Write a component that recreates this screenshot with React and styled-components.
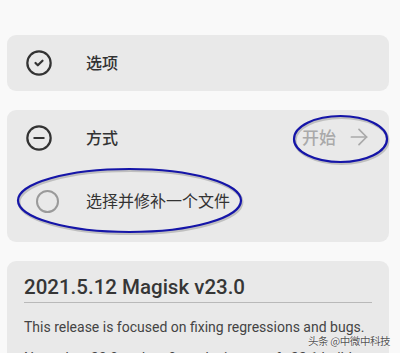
import React from "react";
import styled, { createGlobalStyle } from "styled-components";
import { CircleCheck, CircleMinus, ArrowRight } from "lucide-react";

const Global = createGlobalStyle`
  html, body { margin: 0; padding: 0; background: #f9f9f9; overflow: hidden; }
  body { font-family: Roboto, "Noto Sans CJK SC", sans-serif; }
`;

const Page = styled.div`
  position: relative;
  width: 400px;
  height: 353px;
  overflow: hidden;
  box-sizing: border-box;
  padding: 35px 11px 0 7px;
  display: flex;
  flex-direction: column;
  gap: 19px;
`;

const Card = styled.div`
  background: #e9e9e9;
  border-radius: 9px;
  display: flex;
  flex-direction: column;
  padding: ${(p) => p.$pad || "0"};
  flex-shrink: 0;
`;

const Row = styled.div`
  display: flex;
  align-items: center;
  height: ${(p) => p.$h}px;
  padding: 0 16px 0 18px;
`;

const IconSlot = styled.div`
  width: 28px;
  height: 28px;
  flex-shrink: 0;
  display: flex;
  align-items: center;
  justify-content: center;
  color: #333;
  margin-left: ${(p) => p.$ml || 0}px;
  svg { flex-shrink: 0; }
`;

const Radio = styled.div`
  flex-shrink: 0;
  width: 19px;
  height: 19px;
  border: 2px solid #9a9a9a;
  border-radius: 50%;
`;

const Label = styled.span`
  font-family: "Noto Sans CJK SC", sans-serif;
  font-size: 16px;
  font-weight: ${(p) => p.$w || 500};
  color: #333;
  margin-left: ${(p) => p.$ml}px;
  margin-top: -3px;
  flex: 1;
`;

const Action = styled.div`
  display: flex;
  align-items: center;
  gap: 10px;
  color: #a9a9a9;
  font-family: "Noto Sans CJK SC", sans-serif;
  font-size: 17px;
  font-weight: 500;
  margin: -3px 1px 0 0;
  svg { flex-shrink: 0; }
`;

const Title = styled.h2`
  margin: 0;
  font-family: Roboto, sans-serif;
  font-weight: 500;
  font-size: 20.5px;
  color: #363636;
  padding-bottom: 2px;
  border-bottom: 1px solid #b9b9b9;
  line-height: 26px;
`;

const Para = styled.p`
  margin: ${(p) => p.$m};
  font-family: Roboto, sans-serif;
  font-size: 14px;
  color: #444;
  line-height: 20px;
  white-space: nowrap;
`;

const Watermark = styled.div`
  position: absolute;
  left: 308px;
  top: 333px;
  white-space: nowrap;
  font-family: "Noto Sans CJK SC", sans-serif;
  font-size: 10.5px;
  color: #555;
  text-shadow: 0 0 2px #fff, 0 0 1px #fff;
  letter-spacing: -0.4px;
`;

const Mark = styled.svg`
  position: absolute;
  left: ${(p) => p.$x}px;
  top: ${(p) => p.$y}px;
  overflow: visible;
`;

function Ellipse({ x, y, w, h }) {
  return (
    <Mark $x={x} $y={y} width={w} height={h}>
      <ellipse cx={w / 2 + 1} cy={h / 2 + 1.5} rx={w / 2 - 1} ry={h / 2 - 1} fill="none" stroke="rgba(0,0,0,0.18)" strokeWidth="3" />
      <ellipse cx={w / 2} cy={h / 2} rx={w / 2 - 1} ry={h / 2 - 1} fill="none" stroke="#1515a8" strokeWidth="2.2" />
    </Mark>
  );
}

export default function App() {
  return (
    <>
      <Global />
      <Page>
        <Card>
          <Row $h={56}>
            <IconSlot>
              <CircleCheck size={28} strokeWidth={1.9} />
            </IconSlot>
            <Label $ml={33}>选项</Label>
          </Row>
        </Card>
        <Card $pad="0 0 6px 0">
          <Row $h={56}>
            <IconSlot>
              <CircleMinus size={28} strokeWidth={1.9} />
            </IconSlot>
            <Label $ml={33}>方式</Label>
            <Action>
              开始
              <ArrowRight size={26} strokeWidth={1.6} />
            </Action>
          </Row>
          <Row $h={70}>
            <IconSlot $ml={8}>
              <Radio />
            </IconSlot>
            <Label $ml={25} $w={400}>选择并修补一个文件</Label>
          </Row>
        </Card>
        <Card $pad="13px 17px 10px 17px">
          <Title>2021.5.12 Magisk v23.0</Title>
          <Para $m="14px 0 0 0">This release is focused on fixing regressions and bugs.</Para>
          <Para $m="11px 0 0 0">Note: the v23.0 update fixes the issues of v22.1 build</Para>
        </Card>
        <Ellipse x={293} y={115} w={95} h={48} />
        <Ellipse x={17} y={168} w={225} h={65} />
        <Watermark>头条 @中微中科技</Watermark>
      </Page>
    </>
  );
}
